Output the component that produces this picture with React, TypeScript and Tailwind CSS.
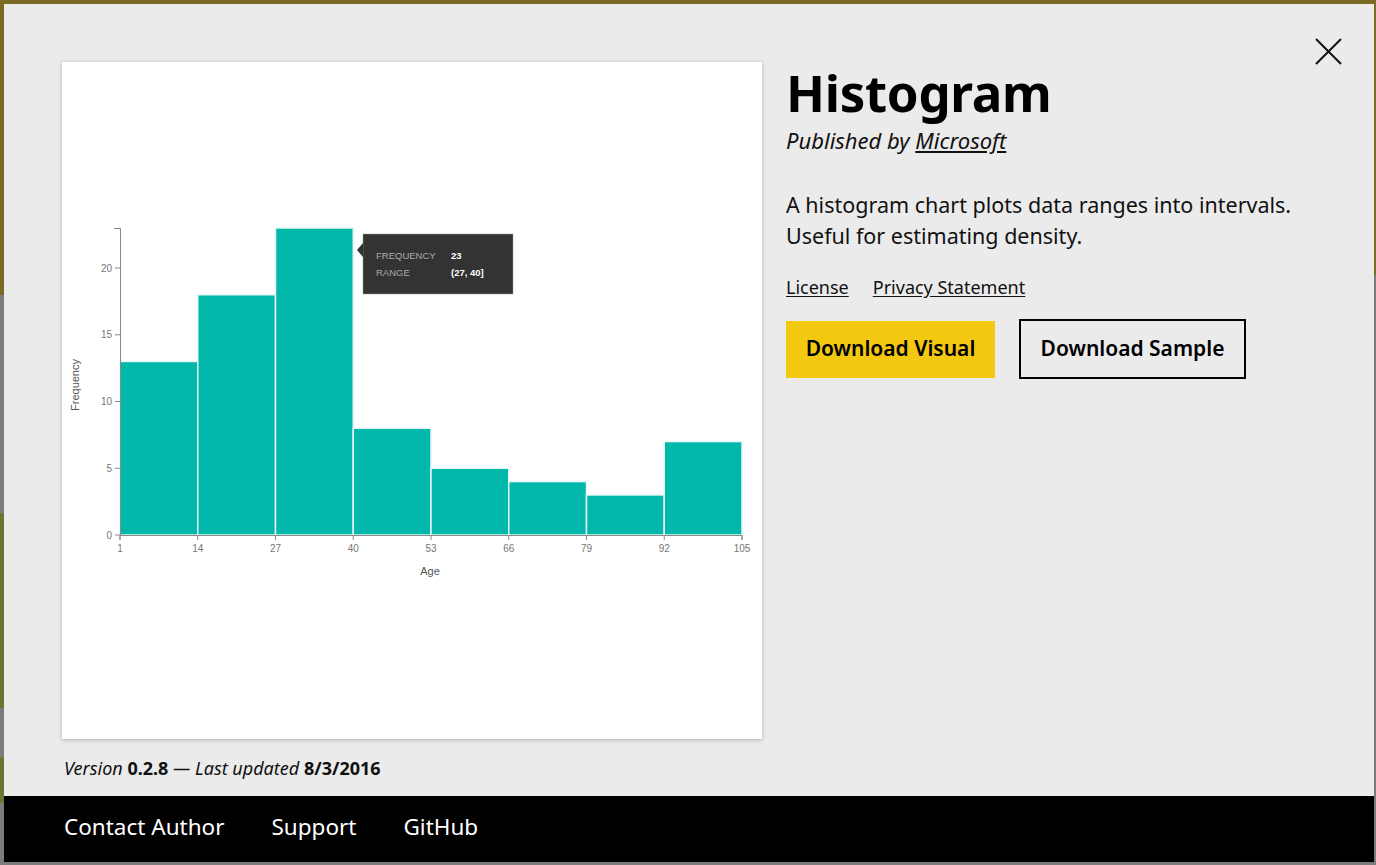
import React from "react";

const bars = [13, 18, 23, 8, 5, 4, 3, 7];
const xLabels = ["1", "14", "27", "40", "53", "66", "79", "92", "105"];
const yTicks = [0, 5, 10, 15, 20];

// chart geometry, in card coordinates
const X0 = 58;
const X1 = 680;
const Y0 = 473;
const UNIT = (473 - 166) / 23;
const BW = (X1 - X0) / bars.length;

const Histogram = () => (
    <svg width="700" height="677" viewBox="0 0 700 677" className="block">
        {bars.map((v, i) => (
            <rect
                key={i}
                x={X0 + i * BW}
                y={Y0 - v * UNIT}
                width={BW}
                height={v * UNIT}
                fill="#01b8aa"
                stroke="#e8f7f5"
                strokeWidth="1.5"
            />
        ))}
        {/* y axis */}
        <path d={`M${X0 - 6} 166.5 H${X0 + 0.5} V${Y0}`} stroke="#8a8a8a" strokeWidth="1" fill="none" />
        {yTicks.map((t) => (
            <g key={t}>
                <line x1={X0 - 5} x2={X0} y1={Y0 - t * UNIT} y2={Y0 - t * UNIT} stroke="#8a8a8a" />
                <text
                    x={X0 - 8}
                    y={Y0 - t * UNIT + 3.5}
                    textAnchor="end"
                    fontSize="10"
                    fill="#777"
                    fontFamily="'Liberation Sans', Arial, sans-serif"
                >
                    {t}
                </text>
            </g>
        ))}
        {/* x axis */}
        <path d={`M${X0} ${Y0 + 5} V${Y0 + 0.5} H${X1} V${Y0 + 5}`} stroke="#8a8a8a" fill="none" />
        {xLabels.map((l, i) => (
            <g key={l}>
                <line x1={X0 + i * BW} x2={X0 + i * BW} y1={Y0} y2={Y0 + 5} stroke="#8a8a8a" />
                <text
                    x={X0 + i * BW}
                    y={Y0 + 17}
                    textAnchor="middle"
                    fontSize="10"
                    fill="#777"
                    fontFamily="'Liberation Sans', Arial, sans-serif"
                >
                    {l}
                </text>
            </g>
        ))}
        <text
            x="368"
            y="513"
            textAnchor="middle"
            fontSize="11"
            fill="#555"
            fontFamily="'Liberation Sans', Arial, sans-serif"
        >
            Age
        </text>
        <text
            transform="translate(17 323) rotate(-90)"
            textAnchor="middle"
            fontSize="11"
            fill="#555"
            fontFamily="'Liberation Sans', Arial, sans-serif"
        >
            Frequency
        </text>
        {/* tooltip */}
        <g fontFamily="'Liberation Sans', Arial, sans-serif" fontSize="9.5">
            <rect x="301" y="172" width="150" height="60" fill="#333" stroke="#999" strokeWidth="0.5" />
            <path d="M301 181 L295 188 L301 195 Z" fill="#333" />
            <text x="314" y="197" fill="#aaa">FREQUENCY</text>
            <text x="389" y="197" fill="#fff" fontWeight="bold">23</text>
            <text x="314" y="214" fill="#aaa">RANGE</text>
            <text x="389" y="214" fill="#fff" fontWeight="bold">(27, 40]</text>
        </g>
    </svg>
);

export default function App() {
    return (
        <div className="flex h-[865px] w-[1376px] overflow-hidden bg-[#7a6a24] font-['Noto_Sans',sans-serif]">
            {/* background peeking on the left */}
            <div className="flex w-[4px] flex-col">
                <div className="h-[295px] bg-[#7a6a24]" />
                <div className="h-[218px] bg-[#7c7c7c]" />
                <div className="h-[195px] bg-[#6e7530]" />
                <div className="h-[49px] bg-[#7c7c7c]" />
                <div className="h-[46px] bg-[#6e7530]" />
                <div className="flex-1 bg-[#7c7c7c]" />
            </div>

            <div className="flex w-[1370px] flex-col">
                <div className="h-[4px] bg-[#7a6a24]" />
                <div className="relative flex h-[858px] flex-col bg-[#ebebeb]">
                    <button className="absolute right-[32px] top-[34px] p-0">
                        <svg width="27" height="27" viewBox="0 0 27 27">
                            <path d="M1 1 L26 26 M26 1 L1 26" stroke="#111" strokeWidth="2" />
                        </svg>
                    </button>

                    <div className="flex flex-1 pl-[58px] pt-[58px]">
                        <div>
                            <div className="w-[700px] h-[677px] bg-white shadow-[0_1px_4px_rgba(0,0,0,0.25)]">
                                <Histogram />
                            </div>
                            <p className="mt-[17px] pl-[2px] text-[18px] leading-[24px] text-[#111]">
                                <i>Version</i> <b>0.2.8</b> <i>— Last updated</i> <b>8/3/2016</b>
                            </p>
                        </div>

                        <div className="ml-[24px] flex flex-col text-[#111]">
                            <h1 className="mt-[1px] text-[51px] font-bold leading-[58px] tracking-[-0.3px] text-black">
                                Histogram
                            </h1>
                            <p className="mt-[5px] text-[22px] italic leading-[28px]">
                                Published by <a className="underline underline-offset-2">Microsoft</a>
                            </p>
                            <p className="mt-[35px] w-[540px] text-[21.5px] leading-[31px]">
                                A histogram chart plots data ranges into intervals.
                                <br />
                                Useful for estimating density.
                            </p>
                            <div className="mt-[24px] flex gap-[24px] text-[18px] leading-[24px]">
                                <a className="underline underline-offset-2">License</a>
                                <a className="underline underline-offset-2">Privacy Statement</a>
                            </div>
                            <div className="mt-[20px] flex items-center gap-[24px] text-[21px] font-semibold">
                                <button className="flex h-[57px] w-[209px] items-center justify-center bg-[#f2c811] text-black">
                                    Download Visual
                                </button>
                                <button className="flex h-[60px] w-[227px] items-center justify-center border-2 border-black text-black">
                                    Download Sample
                                </button>
                            </div>
                        </div>
                    </div>

                    <div className="flex h-[66px] items-center gap-[47px] bg-black pb-[4px] pl-[60px] text-[22.5px] text-white">
                        <a>Contact Author</a>
                        <a>Support</a>
                        <a>GitHub</a>
                    </div>
                </div>
                <div className="flex-1 bg-[#7c7c7c]" />
            </div>

            <div className="flex w-[2px] flex-col">
                <div className="h-[275px] bg-[#7a6a24]" />
                <div className="flex-1 bg-[#7c7c7c]" />
            </div>
        </div>
    );
}
